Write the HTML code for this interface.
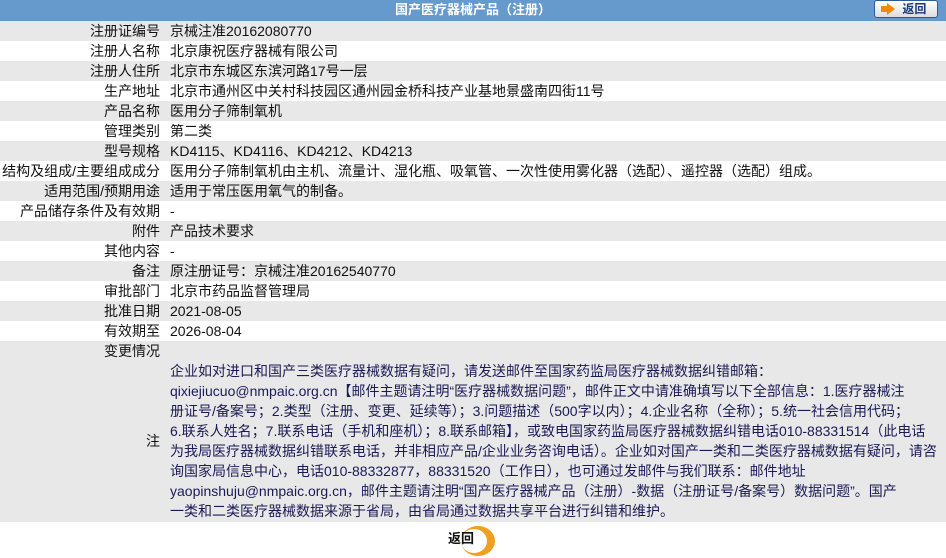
<!DOCTYPE html>
<html><head><meta charset="utf-8"><style>
*{margin:0;padding:0;box-sizing:border-box}
body{width:946px;height:558px;background:#fff;font-family:"Liberation Sans","Noto Sans CJK SC",sans-serif;font-size:14px;color:#111;overflow:hidden;position:relative}
.hd{height:21px;background:#6699cc;color:#fff;font-weight:bold;text-align:center;line-height:20px;font-size:13px;position:relative}
.btn{position:absolute;right:8px;top:0;width:64px;height:18px;background:linear-gradient(#fff,#ddd);border:1px solid #2a5a9a;border-radius:3px;color:#1a3a7a;font-size:12px;line-height:16px;text-align:left;padding-left:12px}
.btn i{display:inline-block;width:0;height:0;border-left:8px solid #f08a00;border-top:6px solid transparent;border-bottom:6px solid transparent;vertical-align:-2px;margin-right:4px;position:relative}
.btn i:before{content:"";position:absolute;left:-14px;top:-3px;width:6px;height:6px;background:#f08a00}
.r{display:flex;height:20px;line-height:20px}
.r:nth-child(odd){background:#e8e8e8}
.l{width:166px;text-align:right;padding-right:6px;white-space:nowrap}
.v{flex:1;padding-left:4px;white-space:nowrap}
.n{display:flex;background:#e8e8e8;height:161px}
.n .l{line-height:161px}
.n .v{color:#1a1a55;line-height:20px;white-space:nowrap}
.bt{position:absolute;left:448px;top:528px;font-weight:bold;font-size:13px}
.circ{position:absolute;left:461px;top:526px;width:34px;height:30px;border-radius:50%;background:#f0a020}
.circ:after{content:"";position:absolute;left:0;top:3px;width:26px;height:24px;border-radius:50%;background:#fff}
</style></head><body>
<div class="hd">国产医疗器械产品（注册）<div class="btn"><i></i> 返回</div></div>
<div>
<div class="r"><div class="l">注册证编号</div><div class="v">京械注准20162080770</div></div>
<div class="r"><div class="l">注册人名称</div><div class="v">北京康祝医疗器械有限公司</div></div>
<div class="r"><div class="l">注册人住所</div><div class="v">北京市东城区东滨河路17号一层</div></div>
<div class="r"><div class="l">生产地址</div><div class="v">北京市通州区中关村科技园区通州园金桥科技产业基地景盛南四街11号</div></div>
<div class="r"><div class="l">产品名称</div><div class="v">医用分子筛制氧机</div></div>
<div class="r"><div class="l">管理类别</div><div class="v">第二类</div></div>
<div class="r"><div class="l">型号规格</div><div class="v">KD4115、KD4116、KD4212、KD4213</div></div>
<div class="r"><div class="l">结构及组成/主要组成成分</div><div class="v">医用分子筛制氧机由主机、流量计、湿化瓶、吸氧管、一次性使用雾化器（选配）、遥控器（选配）组成。</div></div>
<div class="r"><div class="l">适用范围/预期用途</div><div class="v">适用于常压医用氧气的制备。</div></div>
<div class="r"><div class="l">产品储存条件及有效期</div><div class="v">-</div></div>
<div class="r"><div class="l">附件</div><div class="v">产品技术要求</div></div>
<div class="r"><div class="l">其他内容</div><div class="v">-</div></div>
<div class="r"><div class="l">备注</div><div class="v">原注册证号：京械注准20162540770</div></div>
<div class="r"><div class="l">审批部门</div><div class="v">北京市药品监督管理局</div></div>
<div class="r"><div class="l">批准日期</div><div class="v">2021-08-05</div></div>
<div class="r"><div class="l">有效期至</div><div class="v">2026-08-04</div></div>
<div class="r"><div class="l">变更情况</div><div class="v"></div></div>
</div>
<div class="n"><div class="l">注</div><div class="v">企业如对进口和国产三类医疗器械数据有疑问，请发送邮件至国家药监局医疗器械数据纠错邮箱：<br>qixiejiucuo@nmpaic.org.cn【邮件主题请注明“医疗器械数据问题”，邮件正文中请准确填写以下全部信息：1.医疗器械注<br>册证号/备案号；2.类型（注册、变更、延续等）；3.问题描述（500字以内）；4.企业名称（全称）；5.统一社会信用代码；<br>6.联系人姓名；7.联系电话（手机和座机）；8.联系邮箱】，或致电国家药监局医疗器械数据纠错电话010-88331514（此电话<br>为我局医疗器械数据纠错联系电话，并非相应产品/企业业务咨询电话）。企业如对国产一类和二类医疗器械数据有疑问，请咨<br>询国家局信息中心，电话010-88332877，88331520（工作日），也可通过发邮件与我们联系：邮件地址<br>yaopinshuju@nmpaic.org.cn，邮件主题请注明“国产医疗器械产品（注册）-数据（注册证号/备案号）数据问题”。国产<br>一类和二类医疗器械数据来源于省局，由省局通过数据共享平台进行纠错和维护。</div></div>
<div class="circ"></div>
<div class="bt">返回</div>
</body></html>
